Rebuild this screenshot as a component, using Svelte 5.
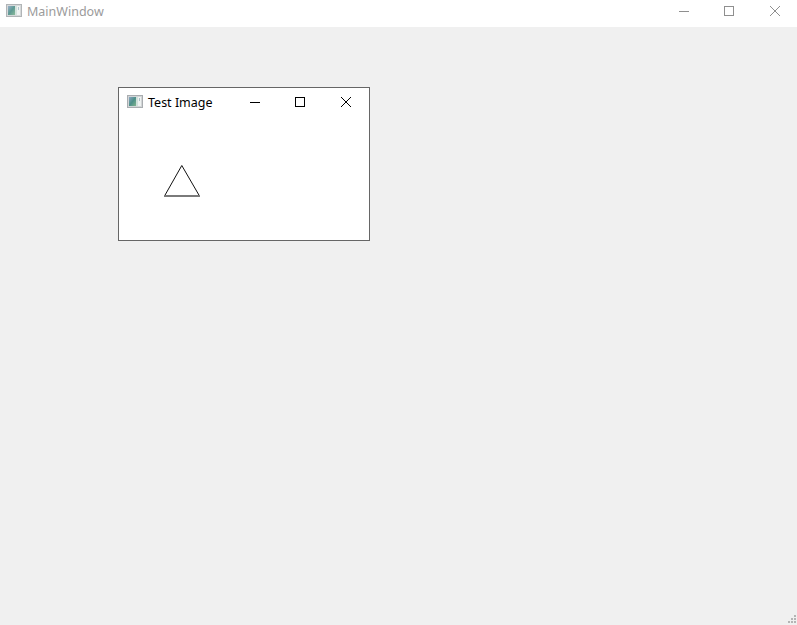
<script>
  const grip = [[7,0],[4,3],[7,3],[1,6],[4,6],[7,6]];
</script>

{#snippet appIcon()}
  <svg class="app-icon" width="16" height="13" viewBox="0 0 16 13">
    <defs>
      <linearGradient id="ico" x1="0" y1="0" x2="1" y2="1">
        <stop offset="0" stop-color="#8fa6c4"/>
        <stop offset="0.5" stop-color="#4c8f88"/>
        <stop offset="1" stop-color="#7fb48e"/>
      </linearGradient>
    </defs>
    <rect x="0" y="0" width="16" height="13" fill="#a9adb0"/>
    <rect x="1" y="1" width="14" height="11" fill="#d2d5d7"/>
    <rect x="2" y="2" width="7" height="9" fill="url(#ico)"/>
    <rect x="9" y="2" width="2" height="9" fill="#cfe0da"/>
    <rect x="11" y="2" width="3" height="9" fill="#eef2f1"/>
    <rect x="12" y="3" width="1" height="3" fill="#a9c0c6"/>
  </svg>
{/snippet}

{#snippet controls()}
  <div class="controls">
    <svg width="12" height="12" viewBox="0 0 12 12"><path d="M1 6.5H11" /></svg>
    <svg width="12" height="12" viewBox="0 0 12 12"><rect x="1.5" y="1.5" width="9" height="9" /></svg>
    <svg width="12" height="12" viewBox="0 0 12 12"><path d="M1 1L11 11M11 1L1 11" /></svg>
  </div>
{/snippet}

<div class="window">
  <header class="titlebar">
    {@render appIcon()}
    <span class="title">MainWindow</span>
    {@render controls()}
  </header>
  <main class="mdi">
    <section class="subwindow">
      <header class="subbar">
        {@render appIcon()}
        <span class="subtitle">Test Image</span>
        {@render controls()}
      </header>
      <svg class="triangle" width="37" height="33" viewBox="0 0 37 33">
        <path class="tri-sides" d="M17.8 0.5L0.8 30.5M17.8 0.5L35.2 30.5" />
        <rect class="tri-base" x="0" y="30" width="36" height="2" />
      </svg>
    </section>
    <svg class="grip" width="9" height="9" viewBox="0 0 9 9">
      {#each grip as [x, y]}
        <rect {x} {y} width="2" height="2" />
      {/each}
    </svg>
  </main>
</div>

<style>
  :global(body) {
    margin: 0;
    background: #f0f0f0;
  }
  .window {
    width: 797px;
    height: 625px;
    display: flex;
    flex-direction: column;
    overflow: hidden;
    font-family: "Noto Sans", "Open Sans", sans-serif;
    font-size: 12.5px;
    line-height: 16px;
  }
  .titlebar {
    height: 27px;
    flex: none;
    background: #fff;
    display: flex;
    align-items: flex-start;
    padding: 4px 0 0 6px;
    box-sizing: border-box;
  }
  .app-icon { flex: none; display: block; }
  .titlebar .app-icon { opacity: 0.9; }
  .title {
    margin-left: 5px;
    color: #9b9b9b;
  }
  .titlebar .controls {
    margin-left: auto;
    margin-right: 16px;
  }
  .titlebar .controls svg { stroke: #8f8f8f; }
  .controls {
    display: flex;
    gap: 33px;
    margin-top: 1px;
  }
  .controls svg {
    fill: none;
    stroke: #000;
    stroke-width: 1;
    display: block;
  }
  .controls svg:last-child { margin-left: 1px; }
  .mdi {
    position: relative;
    flex: 1;
    background: #f0f0f0;
  }
  .subwindow {
    position: absolute;
    left: 118px;
    top: 60px;
    width: 252px;
    height: 154px;
    box-sizing: border-box;
    background: #fff;
    border: 1px solid #666;
  }
  .subbar {
    height: 28px;
    display: flex;
    align-items: flex-start;
    padding: 7px 0 0 8px;
    box-sizing: border-box;
  }
  .subtitle {
    margin-left: 5px;
    color: #000;
  }
  .subbar .controls {
    margin-left: auto;
    margin-right: 17px;
  }
  .triangle {
    display: block;
    margin: 49px 0 0 45px;
    fill: none;
  }
  .tri-sides { stroke: #111; stroke-width: 1; }
  .tri-base { fill: #7a7a7a; }
  .grip {
    position: absolute;
    right: 1px;
    bottom: 1px;
    fill: #b4b4b4;
  }
</style>
